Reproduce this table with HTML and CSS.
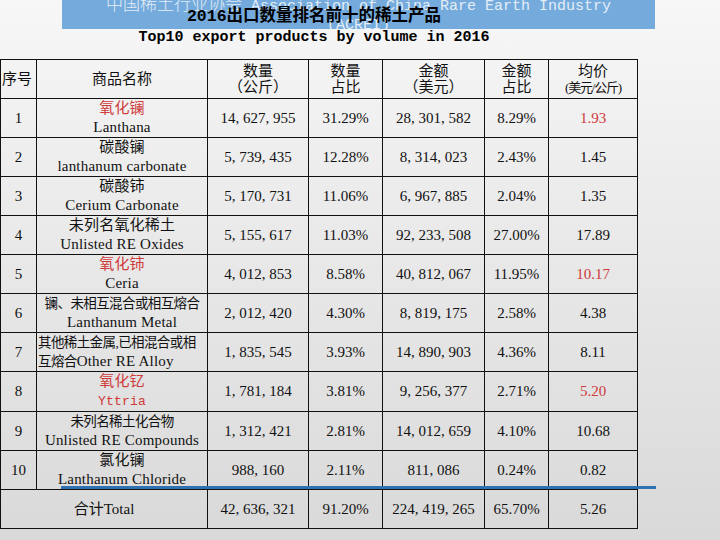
FILE: index.html
```html
<!DOCTYPE html>
<html lang="zh">
<head>
<meta charset="utf-8">
<title>2016出口数量排名前十的稀土产品</title>
<link rel="stylesheet" href="styles.css">
</head>
<body>
<div class="page">
  <header class="head">
    <div class="band">
      <p class="band-line"><span class="band-cjk">中国稀土行业协会</span> Association of China Rare Earth Industry</p>
      <p class="band-line">(ACREI)</p>
    </div>
    <h1 class="title">2016出口数量排名前十的稀土产品</h1>
  </header>
  <p class="subtitle">Top10 export products by volume in 2016</p>

  <table class="data">
    <colgroup>
      <col class="c-no"><col class="c-name"><col class="c-qty"><col class="c-qshare"><col class="c-amt"><col class="c-ashare"><col class="c-price">
    </colgroup>
    <thead>
      <tr>
        <th class="no">序号</th>
        <th>商品名称</th>
        <th>数量<br>（公斤）</th>
        <th>数量<br>占比</th>
        <th>金额<br>（美元）</th>
        <th>金额<br>占比</th>
        <th>均价<br><span class="narrow">(美元/公斤)</span></th>
      </tr>
    </thead>
    <tbody>
      <tr><td>1</td><td class="name"><span class="red">氧化镧</span><br>Lanthana</td><td>14, 627, 955</td><td>31.29%</td><td>28, 301, 582</td><td>8.29%</td><td class="red">1.93</td></tr>
      <tr><td>2</td><td class="name">碳酸镧<br>lanthanum carbonate</td><td>5, 739, 435</td><td>12.28%</td><td>8, 314, 023</td><td>2.43%</td><td>1.45</td></tr>
      <tr><td>3</td><td class="name">碳酸铈<br>Cerium Carbonate</td><td>5, 170, 731</td><td>11.06%</td><td>6, 967, 885</td><td>2.04%</td><td>1.35</td></tr>
      <tr><td>4</td><td class="name">未列名氧化稀土<br>Unlisted RE Oxides</td><td>5, 155, 617</td><td>11.03%</td><td>92, 233, 508</td><td>27.00%</td><td>17.89</td></tr>
      <tr><td>5</td><td class="name"><span class="red">氧化铈</span><br>Ceria</td><td>4, 012, 853</td><td>8.58%</td><td>40, 812, 067</td><td>11.95%</td><td class="red">10.17</td></tr>
      <tr><td>6</td><td class="name"><span class="cond">镧、未相互混合或相互熔合</span><br>Lanthanum Metal</td><td>2, 012, 420</td><td>4.30%</td><td>8, 819, 175</td><td>2.58%</td><td>4.38</td></tr>
      <tr><td>7</td><td class="name left"><span class="cond">其他稀土金属,已相混合或相</span><br><span class="cond">互熔合</span>Other RE Alloy</td><td>1, 835, 545</td><td>3.93%</td><td>14, 890, 903</td><td>4.36%</td><td>8.11</td></tr>
      <tr><td>8</td><td class="name red">氧化钇<br><span class="mono">Yttria</span></td><td>1, 781, 184</td><td>3.81%</td><td>9, 256, 377</td><td>2.71%</td><td class="red">5.20</td></tr>
      <tr><td>9</td><td class="name"><span class="cond">未列名稀土化合物</span><br>Unlisted RE Compounds</td><td>1, 312, 421</td><td>2.81%</td><td>14, 012, 659</td><td>4.10%</td><td>10.68</td></tr>
      <tr><td>10</td><td class="name">氯化镧<br>Lanthanum Chloride</td><td>988, 160</td><td>2.11%</td><td>811, 086</td><td>0.24%</td><td>0.82</td></tr>
      <tr class="total"><td colspan="2">合计Total</td><td>42, 636, 321</td><td>91.20%</td><td>224, 419, 265</td><td>65.70%</td><td>5.26</td></tr>
    </tbody>
  </table>
  <div class="blue-line"></div>
</div>
</body>
</html>
```

FILE: styles.css
```css
html, body {
  margin: 0;
  padding: 0;
}
body {
  width: 720px;
  height: 540px;
  overflow: hidden;
  background: linear-gradient(to bottom, #f7f7f7 0%, #ececec 35%, #e2e2e2 70%, #d9d9d9 100%);
  font-family: "Liberation Serif", "Noto Sans CJK SC", serif;
  color: #111;
}
.page {
  position: relative;
  width: 720px;
  height: 540px;
}
.head {
  display: grid;
  height: 29px;
}
.band {
  grid-area: 1 / 1;
  margin-left: 62px;
  width: 593px;
  height: 29px;
  background: #74abdc;
  overflow: hidden;
  text-align: center;
}
.band-line {
  margin: 0;
  font: 15px/19px "Liberation Mono", "Noto Sans CJK SC", monospace;
  color: #e4edf7;
  white-space: nowrap;
}
.band-line:first-child {
  margin-top: -4px;
}
.band-cjk {
  font-size: 17px;
  font-weight: 300;
}
.title {
  grid-area: 1 / 1;
  width: 628px;
  margin: 0;
  padding-top: 7px;
  font: bold 16.5px/20px "Liberation Mono", "Noto Sans CJK SC", monospace;
  text-align: center;
  color: #000;
}
.subtitle {
  width: 628px;
  margin: 0 0 12px;
  font: bold 15px/18px "Liberation Mono", "Noto Sans CJK SC", monospace;
  text-align: center;
  color: #000;
}
.data {
  border-collapse: collapse;
  table-layout: fixed;
  width: 637px;
  font-size: 15px;
}
.c-no { width: 36px; }
.c-name { width: 171px; }
.c-qty { width: 101px; }
.c-qshare { width: 74px; }
.c-amt { width: 102px; }
.c-ashare { width: 64px; }
.c-price { width: 89px; }
.data th, .data td {
  border: 1px solid #111;
  padding: 0;
  text-align: center;
  vertical-align: middle;
  white-space: nowrap;
  overflow: hidden;
}
.data tr {
  height: 39px;
}
.data th {
  font-weight: normal;
  line-height: 16px;
  font-size: 15px;
}
.data th.no {
  text-align: left;
  padding-left: 1px;
}
.data td {
  line-height: 19px;
}
.data td.name {
  letter-spacing: 0.2px;
}
.data td.left {
  text-align: left;
  padding-left: 1px;
}
.narrow {
  font-size: 13px;
  letter-spacing: -1.2px;
}
.cond {
  font-size: 13.5px;
  letter-spacing: -0.6px;
}
.mono {
  font-family: "Liberation Mono", monospace;
  font-size: 13px;
}
.red {
  color: #cf3a3a;
}
.blue-line {
  position: absolute;
  left: 61px;
  top: 486px;
  width: 595px;
  height: 3px;
  background: #2f72b4;
}
```
